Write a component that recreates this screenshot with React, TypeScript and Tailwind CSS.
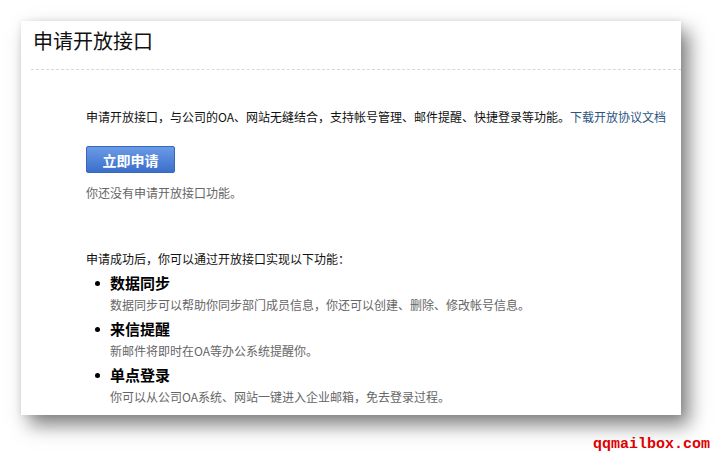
import React from 'react';

const features = [
    { title: '数据同步', desc: '数据同步可以帮助你同步部门成员信息，你还可以创建、删除、修改帐号信息。' },
    { title: '来信提醒', desc: '新邮件将即时在OA等办公系统提醒你。' },
    { title: '单点登录', desc: '你可以从公司OA系统、网站一键进入企业邮箱，免去登录过程。' },
];

export default function App() {
    return (
        <div className="w-[723px] h-[458px] bg-white overflow-hidden font-['Noto_Sans_CJK_SC',sans-serif] pt-[21px] pl-[21px]">
            <div className="w-[660px] h-[394px] bg-white shadow-[8px_10px_18px_rgba(0,0,0,0.5),0_0_6px_rgba(0,0,0,0.08)]">
                <div className="ml-[10px] border-b border-dashed border-[#d8d8d8] pt-[8px] pb-[16px]">
                    <h1 className="pl-[2px] text-[20px] leading-[24px] text-[#111]">申请开放接口</h1>
                </div>

                <div className="pl-[65px]">
                    <p className="mt-[38px] text-[12px] leading-[18px] text-[#111]">
                        申请开放接口，与公司的OA、网站无缝结合，支持帐号管理、邮件提醒、快捷登录等功能。
                        <a href="#" className="text-[#2b5481]">下载开放协议文档</a>
                    </p>

                    <button className="mt-[20px] w-[89px] h-[27px] rounded-[2px] bg-gradient-to-b from-[#6b9be6] to-[#3b6fcb] border border-[#3a68b8] text-white text-[14px] font-bold leading-none">
                        立即申请
                    </button>

                    <p className="mt-[11px] text-[12px] leading-[18px] text-[#666]">你还没有申请开放接口功能。</p>

                    <p className="mt-[48px] text-[12px] leading-[18px] text-[#111]">申请成功后，你可以通过开放接口实现以下功能：</p>

                    <ul>
                        {features.map(f => (
                            <li key={f.title} className="mt-[4px]">
                                <div className="flex items-center h-[22px]">
                                    <span className="ml-[9px] w-[5px] h-[5px] rounded-full bg-black"></span>
                                    <span className="ml-[10px] text-[15px] font-bold text-black">{f.title}</span>
                                </div>
                                <p className="mt-[2px] pl-[24px] text-[12px] leading-[18px] text-[#666]">{f.desc}</p>
                            </li>
                        ))}
                    </ul>
                </div>
            </div>

            <div className="w-[702px] mt-[21px] pr-[13px] flex justify-end">
                <span className="font-['Liberation_Mono',monospace] font-bold text-[15px] leading-[18px] text-[#e00000]">qqmailbox.com</span>
            </div>
        </div>
    );
}
